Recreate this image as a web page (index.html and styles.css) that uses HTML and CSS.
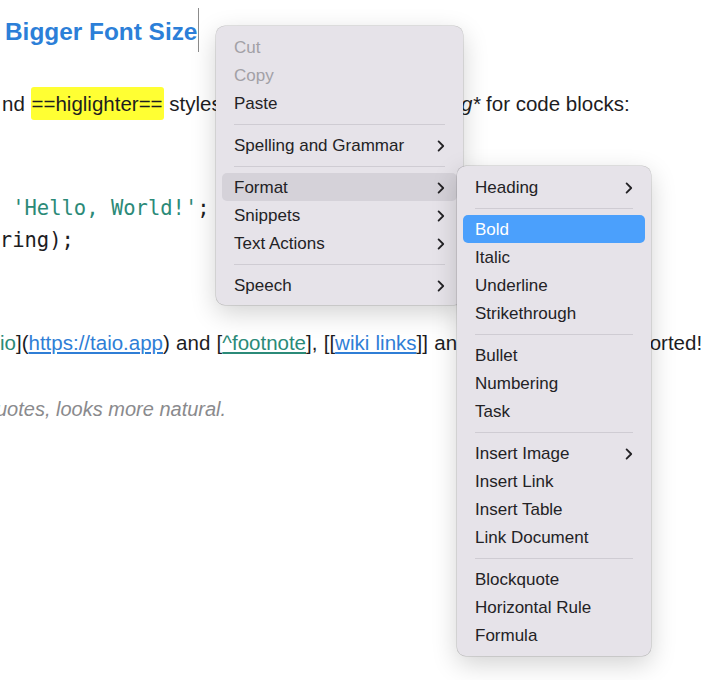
FILE: index.html
```html
<!DOCTYPE html>
<html lang="en">
<head>
<meta charset="utf-8">
<title>Editor context menu</title>
<link rel="stylesheet" href="styles.css">
</head>
<body>
<main class="editor">
  <h1 class="heading"><span class="heading-text">Bigger Font Size</span></h1>
  <p class="line line-hl">nd <mark class="hl">==higlighter==</mark> styles<span class="hidden-run">, <strong>**bold**</strong>, <em>*italic*</em> and </span><em>*string*</em> for code blocks:</p>
  <pre class="code"><span class="kw">const</span> string = <span class="str">'Hello, World!'</span>;
console.log(string);</pre>
  <p class="line line-links"><span class="teal">io</span>](<a class="link">https://taio.app</a>) and [<a class="fn">^footnote</a>], [[<a class="link">wiki links</a>]] an<span class="hidden-run">d more are also supp</span>orted!</p>
  <p class="line quote">uotes, looks more natural.</p>
</main>

<div class="menu menu-main">
  <div class="item disabled"><span>Cut</span></div>
  <div class="item disabled"><span>Copy</span></div>
  <div class="item"><span>Paste</span></div>
  <div class="sep"></div>
  <div class="item"><span>Spelling and Grammar</span><svg class="chev" width="8" height="12" viewBox="0 0 8 12"><path d="M1.6 1.4 L6.2 6 L1.6 10.6"/></svg></div>
  <div class="sep"></div>
  <div class="item active"><span>Format</span><svg class="chev" width="8" height="12" viewBox="0 0 8 12"><path d="M1.6 1.4 L6.2 6 L1.6 10.6"/></svg></div>
  <div class="item"><span>Snippets</span><svg class="chev" width="8" height="12" viewBox="0 0 8 12"><path d="M1.6 1.4 L6.2 6 L1.6 10.6"/></svg></div>
  <div class="item"><span>Text Actions</span><svg class="chev" width="8" height="12" viewBox="0 0 8 12"><path d="M1.6 1.4 L6.2 6 L1.6 10.6"/></svg></div>
  <div class="sep"></div>
  <div class="item"><span>Speech</span><svg class="chev" width="8" height="12" viewBox="0 0 8 12"><path d="M1.6 1.4 L6.2 6 L1.6 10.6"/></svg></div>
</div>

<div class="menu menu-sub">
  <div class="item"><span>Heading</span><svg class="chev" width="8" height="12" viewBox="0 0 8 12"><path d="M1.6 1.4 L6.2 6 L1.6 10.6"/></svg></div>
  <div class="sep"></div>
  <div class="item selected"><span>Bold</span></div>
  <div class="item"><span>Italic</span></div>
  <div class="item"><span>Underline</span></div>
  <div class="item"><span>Strikethrough</span></div>
  <div class="sep"></div>
  <div class="item"><span>Bullet</span></div>
  <div class="item"><span>Numbering</span></div>
  <div class="item"><span>Task</span></div>
  <div class="sep"></div>
  <div class="item"><span>Insert Image</span><svg class="chev" width="8" height="12" viewBox="0 0 8 12"><path d="M1.6 1.4 L6.2 6 L1.6 10.6"/></svg></div>
  <div class="item"><span>Insert Link</span></div>
  <div class="item"><span>Insert Table</span></div>
  <div class="item"><span>Link Document</span></div>
  <div class="sep"></div>
  <div class="item"><span>Blockquote</span></div>
  <div class="item"><span>Horizontal Rule</span></div>
  <div class="item"><span>Formula</span></div>
</div>
</body>
</html>
```

FILE: styles.css
```css
* { box-sizing: border-box; }

html, body {
  margin: 0;
  padding: 0;
  background: #ffffff;
}

body {
  width: 720px;
  height: 680px;
  overflow: hidden;
  position: relative;
  font-family: "Liberation Sans", Arial, sans-serif;
  color: #1d1d1f;
}

.editor {
  display: flex;
  flex-direction: column;
  align-items: flex-start;
}

.heading {
  margin: 16px 0 0 5px;
  font-size: 24.4px;
  line-height: 32px;
  font-weight: 700;
  color: #2c7fd8;
}

.heading-text {
  position: relative;
}

.heading-text::after {
  content: "";
  position: absolute;
  left: calc(100% + 1px);
  top: -10px;
  width: 1px;
  height: 44px;
  background: #8c8c8c;
}

.line {
  margin: 0;
  font-size: 20.5px;
  line-height: 28px;
  white-space: nowrap;
}

.line-hl {
  margin-top: 42px;
  padding-left: 2px;
}

.line-hl .hidden-run {
  word-spacing: -2px;
}

.hl {
  background: #ffff33;
  color: inherit;
  padding: 5px 1px 5px;
  border-radius: 3px;
}

.line-hl em {
  font-style: italic;
}

.code {
  margin: 74px 0 0 -173px;
  font-family: "DejaVu Sans Mono", "Liberation Mono", monospace;
  font-size: 20.5px;
  line-height: 32px;
  color: #1d1d1f;
}

.code .kw {
  color: #a23c9c;
}

.code .str {
  color: #2b8a78;
}

.line-links {
  margin-top: 73px;
  word-spacing: 0.6px;
}

.line-links .hidden-run {
  word-spacing: 0;
}

.teal {
  color: #2b8a78;
}

.link {
  color: #2f7ed6;
  text-decoration: underline;
}

.fn {
  color: #2b8a78;
  text-decoration: underline;
}

.quote {
  margin-top: 38px;
  margin-left: -4px;
  font-size: 20px;
  color: #8a8a8d;
  font-style: italic;
}

/* Context menus */
.menu {
  position: absolute;
  background: #e6e3e9;
  border-radius: 9px;
  box-shadow: 0 0 0 0.5px rgba(0, 0, 0, 0.2), 0 8px 26px rgba(0, 0, 0, 0.18);
  font-size: 17px;
  color: #232225;
}

.menu-main {
  left: 216px;
  top: 26px;
  width: 247px;
  padding: 7px 0 6px;
}

.menu-sub {
  left: 457px;
  top: 166px;
  width: 194px;
  padding: 7px 0;
}

.item {
  height: 28px;
  margin: 0 6px;
  padding: 1px 12px 0;
  border-radius: 5px;
  display: flex;
  align-items: center;
  justify-content: space-between;
  line-height: 27px;
  white-space: nowrap;
}

.item.disabled {
  color: #a2a0a6;
}

.item.active {
  background: #d5d2d9;
}

.item.selected {
  background: #4ba0fc;
  color: #ffffff;
}

.chev {
  display: block;
}

.chev path {
  fill: none;
  stroke: currentColor;
  stroke-width: 1.8;
  stroke-linecap: round;
  stroke-linejoin: round;
}

.sep {
  height: 1px;
  margin: 7px 18px 6px;
  background: #cfccd3;
}
```
